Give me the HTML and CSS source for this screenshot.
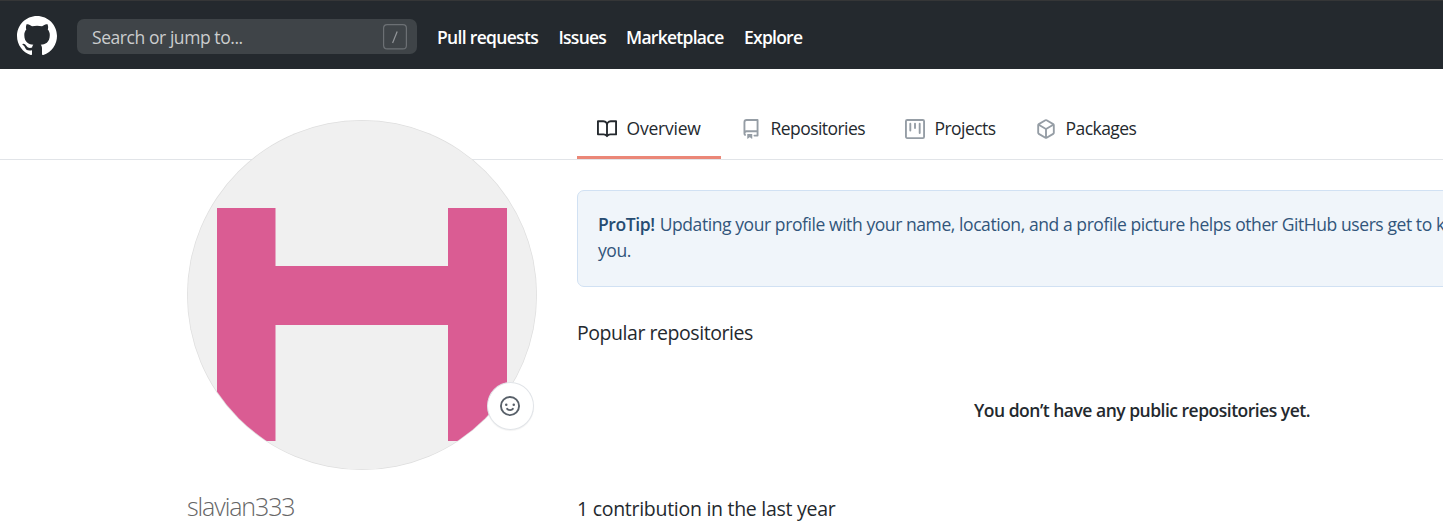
FILE: index.html
```html
<!DOCTYPE html>
<html lang="en">
<head>
<meta charset="utf-8">
<title>slavian333</title>
<link rel="stylesheet" href="styles.css">
</head>
<body>
<header class="header">
  <svg class="logo" viewBox="0 0 16 16"><path d="M8 0C3.58 0 0 3.58 0 8c0 3.54 2.29 6.53 5.47 7.59.4.07.55-.17.55-.38 0-.19-.01-.82-.01-1.49-2.01.37-2.53-.49-2.69-.94-.09-.23-.48-.94-.82-1.13-.28-.15-.68-.52-.01-.53.63-.01 1.08.58 1.23.82.72 1.21 1.87.87 2.33.66.07-.52.28-.87.51-1.07-1.78-.2-3.64-.89-3.64-3.95 0-.87.31-1.59.82-2.15-.08-.2-.36-1.02.08-2.12 0 0 .67-.21 2.2.82.64-.18 1.32-.27 2-.27.68 0 1.36.09 2 .27 1.53-1.04 2.2-.82 2.2-.82.44 1.1.16 1.92.08 2.12.51.56.82 1.27.82 2.15 0 3.07-1.87 3.75-3.65 3.95.29.25.54.73.54 1.48 0 1.07-.01 1.93-.01 2.2 0 .21.15.46.55.38A8.013 8.013 0 0016 8c0-4.42-3.58-8-8-8z"/></svg>
  <div class="search">
    <span class="search-text">Search or jump to...</span>
    <svg class="slash" viewBox="0 0 24 26"><rect x=".6" y=".6" width="22.8" height="24.3" rx="3.5"/><path d="M14.2 7.5 9.6 19"/></svg>
  </div>
  <nav class="nav">
    <a class="nav-pulls">Pull requests</a>
    <a class="nav-issues">Issues</a>
    <a class="nav-market">Marketplace</a>
    <a class="nav-explore">Explore</a>
  </nav>
</header>
<div class="tabbar">
  <nav class="tabs">
    <a class="tab tab-overview">
      <svg viewBox="0 0 16 16"><path fill-rule="evenodd" d="M0 1.75A.75.75 0 01.75 1h4.253c1.227 0 2.317.59 3 1.501A3.744 3.744 0 0111.006 1h4.245a.75.75 0 01.75.75v10.5a.75.75 0 01-.75.75h-4.507a2.25 2.25 0 00-1.591.659l-.622.621a.75.75 0 01-1.06 0l-.622-.621A2.25 2.25 0 005.258 13H.75a.75.75 0 01-.75-.75V1.75zm8.755 3a2.25 2.25 0 012.25-2.25H14.5v9h-3.757c-.71 0-1.4.201-1.992.572l.004-7.322zm-1.504 7.324l.004-5.073-.002-2.253A2.25 2.25 0 005.003 2.5H1.5v9h3.757a3.75 3.75 0 011.994.574z"/></svg>
      <span>Overview</span>
    </a>
    <a class="tab tab-repos">
      <svg viewBox="0 0 16 16"><path fill-rule="evenodd" d="M2 2.5A2.5 2.5 0 014.5 0h8.75a.75.75 0 01.75.75v12.5a.75.75 0 01-.75.75h-2.5a.75.75 0 110-1.500h1.750v-2h-8a1 1 0 00-.714 1.700.75.75 0 01-1.072 1.050A2.495 2.495 0 012 11.500v-9zm10.500-1V9h-8c-.356 0-.694.074-1 .208V2.500a1 1 0 011-1h8zM5 12.250v3.250a.25.25 0 00.4.200l1.450-1.087a.25.25 0 01.3 0L8.600 15.700a.25.25 0 00.4-.200v-3.250a.25.25 0 00-.25-.250h-3.500a.25.25 0 00-.25.250z"/></svg>
      <span>Repositories</span>
    </a>
    <a class="tab tab-projects">
      <svg viewBox="0 0 16 16"><path fill-rule="evenodd" d="M1.750 0A1.750 1.750 0 000 1.750v12.500C0 15.216.784 16 1.750 16h12.500A1.750 1.750 0 0016 14.250V1.750A1.750 1.750 0 0014.250 0H1.750zM1.500 1.750a.25.25 0 01.25-.250h12.500a.25.25 0 01.25.250v12.500a.25.25 0 01-.25.250H1.750a.25.25 0 01-.25-.250V1.750zM11.750 3a.75.75 0 00-.750.750v7.500a.75.75 0 001.500 0v-7.500a.75.75 0 00-.750-.750zm-8.250.750a.75.75 0 011.500 0v5.500a.75.75 0 01-1.500 0v-5.500zM8 3a.75.75 0 00-.750.750v3.500a.75.75 0 001.500 0v-3.500A.75.75 0 008 3z"/></svg>
      <span>Projects</span>
    </a>
    <a class="tab tab-packages">
      <svg viewBox="0 0 16 16"><path fill-rule="evenodd" d="M8.878.392a1.750 1.750 0 00-1.756 0l-5.250 3.045A1.750 1.750 0 001 4.951v6.098c0 .624.332 1.200.872 1.514l5.250 3.045a1.750 1.750 0 001.756 0l5.250-3.045c.54-.313.872-.890.872-1.514V4.951c0-.624-.332-1.200-.872-1.514L8.878.392zM7.875 1.690a.25.25 0 01.25 0l4.630 2.685L8 7.133 3.245 4.375l4.630-2.685zM2.500 5.677v5.372c0 .090.047.171.125.216l4.625 2.683V8.432L2.500 5.677zm6.250 8.271l4.625-2.683a.25.25 0 00.125-.216V5.677L8.750 8.432v5.516z"/></svg>
      <span>Packages</span>
    </a>
  </nav>
</div>
<main class="layout">
  <aside class="profile">
    <div class="avatar-box">
      <svg class="avatar" viewBox="0 0 350 350">
        <defs><clipPath id="round"><circle cx="175" cy="175" r="174.300"/></clipPath></defs>
        <circle cx="175" cy="175" r="175" fill="#dedede"/>
        <g clip-path="url(#round)"><path fill="#f0f0f0" d="M0 0h350v350H0z"/><path fill="#da5c93" d="M30 88h58.500v58H261V88h59v233h-59V205H88.500v116H30z"/></g>
      </svg>
      <div class="status"><svg viewBox="0 0 16 16"><path fill-rule="evenodd" d="M1.500 8a6.500 6.500 0 1113 0 6.500 6.500 0 01-13 0zM8 0a8 8 0 100 16A8 8 0 008 0zM5 8a1 1 0 100-2 1 1 0 000 2zm7-1a1 1 0 11-2 0 1 1 0 012 0zM5.320 9.636a.75.75 0 011.038.175l.007.009c.103.118.22.222.350.310.264.178.683.370 1.285.370.602 0 1.020-.192 1.285-.371.130-.088.247-.192.350-.310l.007-.008a.75.75 0 111.222.870l-.614-.431c.614.430.614.431.613.431v.001l-.001.002-.002.003-.005.007-.014.019a1.984 1.984 0 01-.184.213c-.160.166-.338.316-.530.445-.630.418-1.370.638-2.127.629-.946 0-1.652-.308-2.126-.630a3.331 3.331 0 01-.715-.657l-.014-.020-.005-.006-.002-.003v-.002h-.001l.613-.432-.614.430a.75.75 0 01.183-1.044z"/></svg></div>
    </div>
    <div class="username"><span>slavian333</span></div>
  </aside>
  <section class="content">
    <div class="tip"><p class="tip-line"><b>ProTip!</b> <span class="tip-text">Updating your profile with your name, location, and a profile picture helps other GitHub users get to know</span></p><p class="tip-line">you.</p></div>
    <h2 class="popular"><span>Popular repositories</span></h2>
    <p class="blank"><span>You don’t have any public repositories yet.</span></p>
    <h2 class="contrib"><span>1 contribution in the last year</span></h2>
  </section>
</main>
</body>
</html>
```
FILE: styles.css
```css
* { box-sizing: border-box; }
html { overflow: hidden; }
body {
  margin: 0;
  height: 529px;
  overflow: hidden;
  background: #fff;
  color: #24292e;
  font-family: "Open Sans", "Noto Sans", sans-serif;
  font-size: 17.5px;
}
h2, p { margin: 0; font-weight: 400; }
svg { display: block; flex: none; fill: currentColor; }
a, span { white-space: nowrap; }

.header {
  height: 69px;
  padding: 4px 17px 0;
  display: flex;
  align-items: center;
  background: #24292e;
  border-top: 1px solid #353637;
  color: #fff;
}
.logo { width: 40px; height: 40px; margin-bottom: 2px; }
.search {
  width: 340px;
  height: 35px;
  margin: 0 20px 1px;
  padding: 0 10px 0 15px;
  display: flex;
  align-items: center;
  justify-content: space-between;
  border-radius: 7px;
  background: #3f4448;
  color: #cbcdce;
}
.search-text { letter-spacing: -.43px; }
.slash { width: 24px; height: 26px; fill: none; stroke: #6c7074; stroke-width: 1.2; }
.slash path { stroke: #93969a; }
.nav { display: flex; font-weight: 600; letter-spacing: -.68px; margin-top: -1px; }
.nav-pulls { width: 121.5px; }
.nav-issues { width: 67.5px; letter-spacing: -.75px; }
.nav-market { width: 118px; letter-spacing: -.73px; }
.nav-explore { letter-spacing: -.75px; }

.tabbar { height: 91px; padding: 29px 0 0 577px; border-bottom: 1px solid #e1e4e8; }
.tabs { display: flex; height: 61px; }
.tab { display: flex; align-items: center; gap: 9.5px; padding: 4px 0 0 20px; border-bottom: 3px solid transparent; letter-spacing: -.55px; }
.tab span { padding-bottom: 3px; }
.tab svg { width: 20px; height: 20px; color: #959da5; }
.tab-overview { width: 144px; border-bottom-color: #eb8777; font-weight: 500; letter-spacing: -.22px; }
.tab-overview svg { color: #24292e; }
.tab-repos { width: 164px; }
.tab-projects { width: 131px; }

.layout { display: flex; gap: 40px; padding-left: 187px; }
.profile { flex: none; width: 350px; margin-top: -40px; }
.avatar-box { position: relative; height: 350px; }
.avatar { width: 350px; height: 350px; }
.status {
  position: absolute;
  left: 300px;
  top: 262px;
  width: 47px;
  height: 48px;
  padding-right: 1px;
  display: grid;
  place-items: center;
  border: 1px solid #e1e4e8;
  border-radius: 50%;
  background: #fff;
  color: #586069;
  box-shadow: 0 1px 1px rgba(0,0,0,.05);
}
.status svg { width: 20px; height: 20px; }
.username { margin-top: 19px; font-size: 25px; line-height: 34px; font-weight: 300; color: #666; letter-spacing: -1.1px; }

.content { flex: none; width: 902px; padding-top: 30px; }
.tip {
  height: 97px;
  padding: 20px 20px;
  border: 1px solid #d1e1f3;
  border-radius: 7px;
  background: #f0f5fa;
  color: #32557b;
}
.tip-line { line-height: 26px; white-space: nowrap; letter-spacing: -.42px; }
.tip b { font-weight: 600; color: #264c72; }
.tip-text { margin-left: 1px; }
.popular { margin-top: 31px; font-size: 19.5px; line-height: 30px; letter-spacing: -.45px; }
.blank { margin-top: 49px; padding-left: 397px; line-height: 26px; font-weight: 600; letter-spacing: -.5px; }
.contrib { margin-top: 71px; font-size: 19.5px; line-height: 30px; letter-spacing: -.28px; }
```
